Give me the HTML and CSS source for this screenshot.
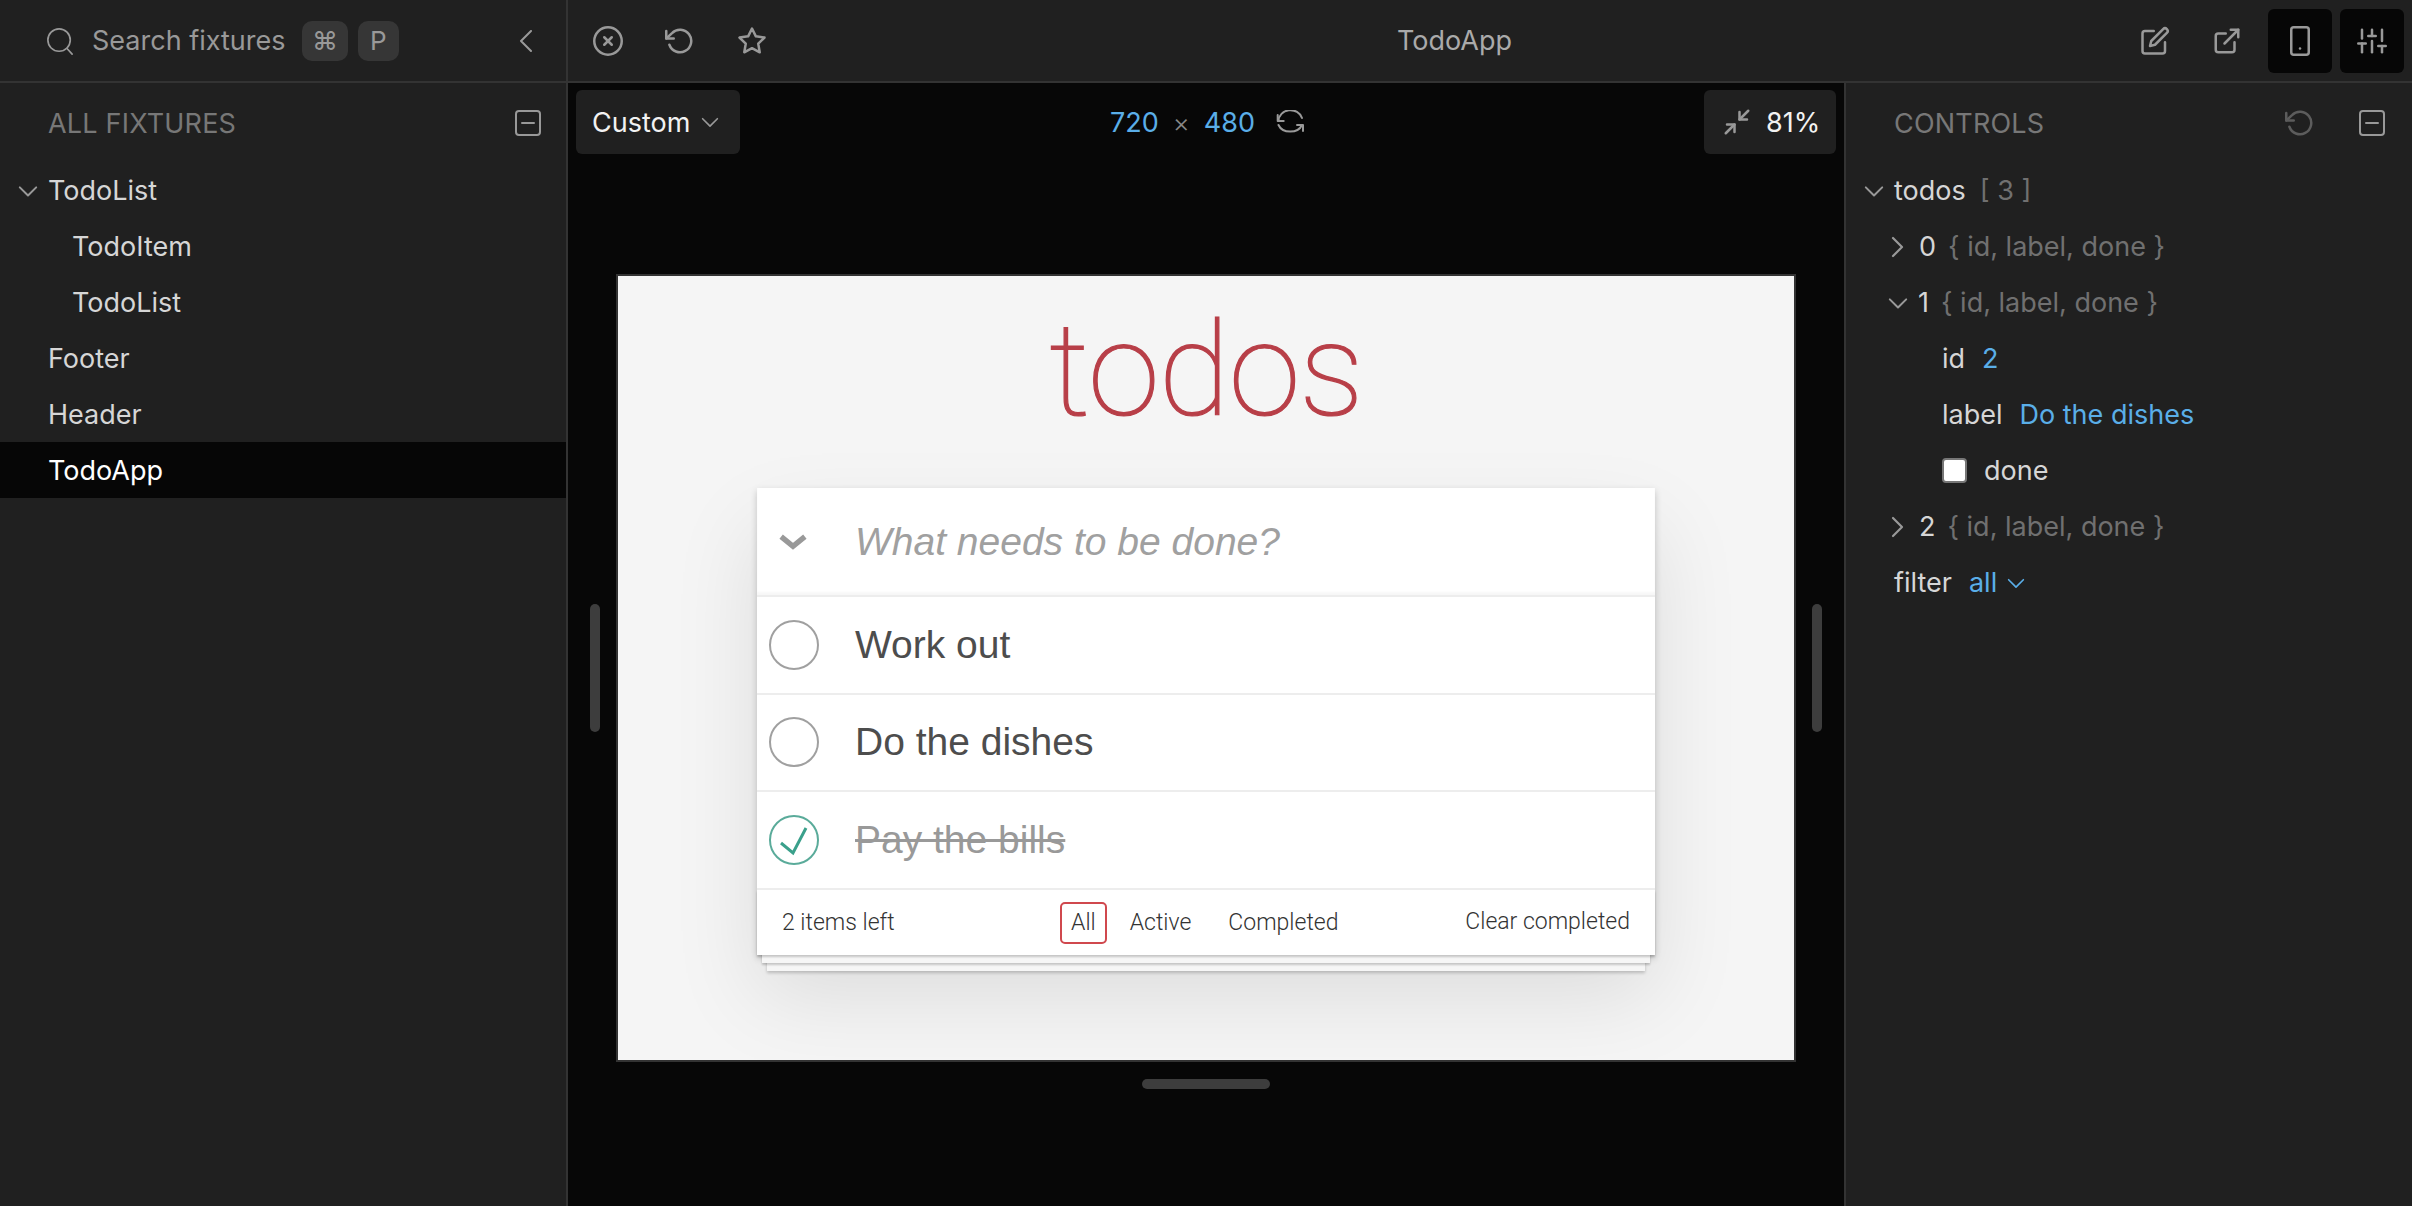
FILE: index.html
```html
<!DOCTYPE html>
<html lang="en">
<head>
  <meta charset="UTF-8" />
  <title>TodoApp - Cosmos</title>
  <link rel="stylesheet" href="styles.css">
</head>
<body>
  <svg class="sprite" width="0" height="0">
    <symbol id="chev-down" viewBox="0 0 22 22"><polyline points="2,7 11,16 20,7"/></symbol>
    <symbol id="chev-right" viewBox="0 0 22 22"><polyline points="7,2 16,11 7,20"/></symbol>
    <symbol id="minus-box" viewBox="0 0 26 26"><rect x="1" y="1" width="24" height="24" rx="3"/><line x1="7" y1="13" x2="19" y2="13"/></symbol>
    <symbol id="reset" viewBox="0 0 24 24"><polyline points="1 4 1 10 7 10"/><path d="M3.51 15a9 9 0 1 0 2.13-9.36L1 10"/></symbol>
  </svg>

  <aside class="sidebar">
    <div class="search-bar">
      <svg class="icon search-icon" viewBox="0 0 30 30"><circle cx="14" cy="14" r="12"/><line x1="22.5" y1="23" x2="28" y2="29"/></svg>
      <span class="search-text">Search fixtures</span>
      <span class="kbd kbd-cmd">⌘</span>
      <span class="kbd">P</span>
      <svg class="icon collapse-icon" viewBox="0 0 14 22"><polyline points="12,1 2,11 12,21"/></svg>
    </div>
    <div class="section-head">
      <span class="section-title">ALL FIXTURES</span>
      <svg class="icon box-icon"><use href="#minus-box"/></svg>
    </div>
    <div class="row has-chev"><svg class="icon chev"><use href="#chev-down"/></svg>TodoList</div>
    <div class="row nested">TodoItem</div>
    <div class="row nested">TodoList</div>
    <div class="row">Footer</div>
    <div class="row">Header</div>
    <div class="row selected">TodoApp</div>
  </aside>

  <div class="main">
    <header class="topbar">
      <div class="topbar-left">
        <svg class="icon tool" viewBox="0 0 24 24"><circle cx="12" cy="12" r="11"/><line x1="15" y1="9" x2="9" y2="15"/><line x1="9" y1="9" x2="15" y2="15"/></svg>
        <svg class="icon tool"><use href="#reset"/></svg>
        <svg class="icon tool" viewBox="0 0 24 24"><polygon points="12 2 15.09 8.26 22 9.27 17 14.14 18.18 21.02 12 17.77 5.82 21.02 7 14.14 2 9.27 8.91 8.26 12 2"/></svg>
      </div>
      <div class="topbar-title">TodoApp</div>
      <div class="topbar-right">
        <svg class="icon tool" viewBox="0 0 24 24"><path d="M11 4H4a2 2 0 0 0-2 2v14a2 2 0 0 0 2 2h14a2 2 0 0 0 2-2v-7"/><path d="M18.5 2.5a2.12 2.12 0 0 1 3 3L12 15l-4 1 1-4 9.5-9.5z"/></svg>
        <svg class="icon tool" viewBox="0 0 24 24"><path d="M18 13v6a2 2 0 0 1-2 2H5a2 2 0 0 1-2-2V8a2 2 0 0 1 2-2h6"/><polyline points="15 3 21 3 21 9"/><line x1="10" y1="14" x2="21" y2="3"/></svg>
        <div class="tool-btn"><svg class="icon tool" viewBox="0 0 24 24"><rect x="5" y="1" width="14" height="22" rx="2"/><line x1="12" y1="18" x2="12.01" y2="18"/></svg></div>
        <div class="tool-btn"><svg class="icon tool" viewBox="0 0 24 24"><line x1="4" y1="21" x2="4" y2="14"/><line x1="4" y1="10" x2="4" y2="3"/><line x1="12" y1="21" x2="12" y2="12"/><line x1="12" y1="8" x2="12" y2="3"/><line x1="20" y1="21" x2="20" y2="16"/><line x1="20" y1="12" x2="20" y2="3"/><line x1="1" y1="14" x2="7" y2="14"/><line x1="9" y1="8" x2="15" y2="8"/><line x1="17" y1="16" x2="23" y2="16"/></svg></div>
      </div>
    </header>

    <div class="workspace">
      <section class="stage">
        <div class="stage-bar">
          <div class="stage-btn custom-btn">Custom <svg class="icon chev-small"><use href="#chev-down"/></svg></div>
          <div class="viewport-size">
            <span class="blue">720</span><span class="times">×</span><span class="blue">480</span>
            <svg class="icon swap-icon" viewBox="0 0 28 24"><polyline points="1.7 5 1.7 11 7.7 11"/><path d="M2.5 11A12 11 0 0 1 26 8"/><polyline points="21 15 27 15 27 21"/><path d="M2.5 15A12.5 10 0 0 0 26 15"/></svg>
          </div>
          <div class="stage-btn zoom-btn">
            <svg class="icon shrink-icon" viewBox="0 0 24 24"><polyline points="4 14 10 14 10 20"/><polyline points="20 10 14 10 14 4"/><line x1="14" y1="10" x2="21" y2="3"/><line x1="3" y1="21" x2="10" y2="14"/></svg>
            81%
          </div>
        </div>

        <div class="frame">
          <h1 class="todo-title">todos</h1>
          <div class="todo-card">
            <div class="todo-input">
              <svg class="toggle-all" viewBox="0 0 26 16"><polyline points="2,3 13,12 24,3"/></svg>
              <span class="placeholder">What needs to be done?</span>
            </div>
            <div class="todo-item">
              <span class="circle"></span>
              <span class="todo-label">Work out</span>
            </div>
            <div class="todo-item">
              <span class="circle"></span>
              <span class="todo-label">Do the dishes</span>
            </div>
            <div class="todo-item">
              <span class="circle done">
                <svg viewBox="0 0 50 50"><polyline points="12,28 24,38 37,13"/></svg>
              </span>
              <span class="todo-label struck">Pay the bills</span>
            </div>
            <div class="todo-footer">
              <span class="left-count">2 items left</span>
              <div class="filters">
                <span class="filter active-filter">All</span>
                <span class="filter">Active</span>
                <span class="filter filter-last">Completed</span>
              </div>
              <span class="clear">Clear completed</span>
            </div>
          </div>
        </div>

        <div class="handle handle-bottom"></div>
        <div class="handle handle-left"></div>
        <div class="handle handle-right"></div>
      </section>

      <aside class="controls">
        <div class="section-head controls-head">
          <span class="section-title">CONTROLS</span>
          <svg class="icon reset-icon"><use href="#reset"/></svg>
          <svg class="icon box-icon"><use href="#minus-box"/></svg>
        </div>
        <div class="row has-chev"><svg class="icon chev"><use href="#chev-down"/></svg>todos<span class="muted gap-l">[ 3 ]</span></div>
        <div class="row prop-closed"><svg class="icon chev-side"><use href="#chev-right"/></svg>0<span class="muted gap-m">{ id, label, done }</span></div>
        <div class="row prop-open"><svg class="icon chev"><use href="#chev-down"/></svg>1<span class="muted gap-m">{ id, label, done }</span></div>
        <div class="row leaf">id<span class="blue gap-s">2</span></div>
        <div class="row leaf">label<span class="blue gap-s">Do the dishes</span></div>
        <div class="row leaf"><span class="check"></span>done</div>
        <div class="row prop-closed"><svg class="icon chev-side"><use href="#chev-right"/></svg>2<span class="muted gap-m">{ id, label, done }</span></div>
        <div class="row">filter<span class="blue gap-s">all</span><svg class="icon chev-blue"><use href="#chev-down"/></svg></div>
      </aside>
    </div>
  </div>
</body>
</html>
```

FILE: styles.css
```css
* {
  box-sizing: border-box;
}

html, body {
  height: 100%;
}

body {
  margin: 0;
  display: flex;
  height: 1206px;
  overflow: hidden;
  background: #202020;
  color: #d6d6d6;
  font-family: Inter, "Noto Sans", sans-serif;
  font-size: 27px;
}

.sprite {
  position: absolute;
}

.icon {
  fill: none;
  stroke: #999;
  stroke-width: 2;
  stroke-linecap: round;
  stroke-linejoin: round;
  flex: none;
}

.blue {
  color: #5aaee8;
}

.muted {
  color: #707070;
}

.gap-s {
  margin-left: 17px;
}

.gap-m {
  margin-left: 12px;
}

.gap-l {
  margin-left: 14px;
}

/* sidebar */
.sidebar {
  width: 568px;
  flex: none;
  border-right: 2px solid #333;
}

.search-bar {
  height: 83px;
  display: flex;
  align-items: center;
  padding-left: 46px;
  border-bottom: 2px solid #333;
}

.search-icon {
  width: 28px;
  height: 30px;
  stroke-width: 1.8;
}

.search-text {
  margin-left: 18px;
  color: #999;
  width: 210px;
}

.kbd {
  height: 40px;
  padding: 0 12px;
  border-radius: 10px;
  background: #363636;
  color: #999;
  font-size: 26px;
  line-height: 40px;
  margin-left: 10px;
}

.kbd-cmd {
  margin-left: 0;
  width: 46px;
  text-align: center;
  padding: 0;
}

.collapse-icon {
  width: 14px;
  height: 22px;
  margin-left: auto;
  margin-right: 33px;
}

.section-head {
  height: 79px;
  display: flex;
  align-items: center;
  justify-content: space-between;
  padding: 1px 25px 0 48px;
}

.section-title {
  color: #777;
  letter-spacing: 0.2px;
}

.box-icon {
  width: 26px;
  height: 26px;
}

.row {
  height: 56px;
  display: flex;
  align-items: center;
  padding-top: 1px;
  padding-left: 48px;
  white-space: pre;
}

.row.has-chev {
  padding-left: 18px;
}

.chev {
  width: 20px;
  height: 20px;
  margin-right: 10px;
  stroke-width: 2.2;
}

.row.nested {
  padding-left: 72px;
}

.row.selected {
  background: #060606;
  color: #fff;
}

/* top bar */
.main {
  flex: 1;
  min-width: 0;
  display: flex;
  flex-direction: column;
}

.topbar {
  height: 83px;
  flex: none;
  display: flex;
  align-items: center;
  border-bottom: 2px solid #333;
  padding: 0 8px 0 25px;
}

.tool {
  width: 30px;
  height: 30px;
}

.topbar-left {
  width: 550px;
  display: flex;
  gap: 42px;
}

.topbar-title {
  flex: 1;
  text-align: center;
  color: #aaa;
}

.topbar-right {
  width: 638px;
  display: flex;
  align-items: center;
  justify-content: flex-end;
  gap: 8px;
}

.topbar-right > .tool:first-child {
  margin-right: 34px;
}

.topbar-right > .tool:nth-child(2) {
  margin-right: 18px;
}

.tool-btn {
  width: 64px;
  height: 64px;
  background: #060606;
  border-radius: 6px;
  display: flex;
  align-items: center;
  justify-content: center;
}

/* stage */
.workspace {
  flex: 1;
  display: flex;
  min-height: 0;
}

.stage {
  position: relative;
  width: 1276px;
  flex: none;
  background: #070707;
  display: flex;
  flex-direction: column;
  align-items: center;
  padding: 7px 8px 0;
}

.stage-bar {
  position: relative;
  align-self: stretch;
  height: 64px;
  display: flex;
  align-items: center;
  justify-content: space-between;
}

.stage-btn {
  height: 64px;
  background: #202020;
  border-radius: 6px;
  display: flex;
  align-items: center;
  color: #f2f2f2;
}

.custom-btn {
  width: 164px;
  padding-left: 16px;
  gap: 11px;
}

.chev-small {
  width: 18px;
  height: 18px;
}

.zoom-btn {
  width: 132px;
  padding-left: 18px;
  gap: 14px;
}

.shrink-icon {
  width: 30px;
  height: 30px;
}

.viewport-size {
  position: absolute;
  left: 534px;
  top: 0;
  height: 64px;
  display: flex;
  align-items: center;
}

.times {
  color: #888;
  margin: 0 14px;
  font-size: 26px;
  font-weight: 300;
}

.swap-icon {
  width: 28px;
  height: 24px;
  margin-left: 21px;
}

.handle {
  background: #3d3d3d;
  border-radius: 6px;
}

.handle-bottom {
  width: 128px;
  height: 10px;
  margin-top: 17px;
}

.handle-left,
.handle-right {
  position: absolute;
  top: 521px;
  width: 10px;
  height: 128px;
}

.handle-left {
  left: 22px;
}

.handle-right {
  left: 1244px;
}

/* the fixture */
.frame {
  width: 1180px;
  height: 788px;
  margin-top: 120px;
  border: 2px solid #333;
  background: #f5f5f5;
  display: flex;
  flex-direction: column;
  align-items: center;
  overflow: hidden;
  font-family: "Liberation Sans", Arial, sans-serif;
}

.todo-title {
  margin: 0;
  height: 212px;
  font-family: Roboto, "Liberation Sans", sans-serif;
  font-weight: 100;
  font-size: 130px;
  letter-spacing: -1px;
  line-height: 190px;
  color: #b83f48;
  -webkit-text-stroke: 1.2px #b83f48;
}

.todo-card {
  width: 898px;
  background: #fff;
  box-shadow: 0 3px 7px rgba(0, 0, 0, 0.2), 0 41px 82px rgba(0, 0, 0, 0.1);
}

.todo-input {
  height: 109px;
  display: flex;
  align-items: center;
  border-bottom: 2px solid #ededed;
  box-shadow: inset 0 -3px 2px rgba(0, 0, 0, 0.03);
  padding-left: 22px;
}

.toggle-all {
  width: 28px;
  height: 18px;
  fill: none;
  stroke: #999;
  stroke-width: 5;
}

.placeholder {
  margin-left: 48px;
  font-style: italic;
  font-size: 39px;
  color: #a0a0a0;
}

.todo-item {
  height: 97.5px;
  display: flex;
  align-items: center;
  border-bottom: 2px solid #ededed;
  padding-left: 12px;
  font-size: 39px;
  color: #4d4d4d;
}

.circle {
  width: 50px;
  height: 50px;
  flex: none;
  border: 2px solid #a0a0a0;
  border-radius: 50%;
}

.circle.done {
  border-color: #5aab9a;
}

.circle.done svg {
  display: block;
  margin: -2px;
  width: 50px;
  height: 50px;
  fill: none;
  stroke: #3aa08b;
  stroke-width: 3;
}

.todo-label {
  margin-left: 36px;
}

.struck {
  color: #999;
  text-decoration: line-through;
}

.todo-footer {
  height: 65px;
  display: flex;
  align-items: center;
  padding: 1px 25px 0;
  position: relative;
  font-family: Roboto, "Liberation Sans", sans-serif;
  font-weight: 300;
  font-size: 23px;
  color: #333;
  box-shadow: 0 2px 2px rgba(0, 0, 0, 0.2),
    0 13px 0 -5px #f6f6f6,
    0 15px 2px -5px rgba(0, 0, 0, 0.2),
    0 26px 0 -10px #f6f6f6,
    0 28px 3px -10px rgba(0, 0, 0, 0.2);
}

.left-count {
  width: 278px;
}

.filters {
  display: flex;
  gap: 12px;
}

.filter {
  height: 42px;
  line-height: 38px;
  padding: 0 9px;
  border: 2px solid transparent;
  border-radius: 5px;
}

.filter-last {
  margin-left: 3px;
}

.active-filter {
  border-color: #d0484e;
}

.clear {
  margin-left: auto;
  margin-top: -2px;
}

/* controls panel */
.controls {
  flex: 1;
  min-width: 0;
  border-left: 2px solid #333;
}

.controls-head {
  padding: 1px 27px 0 48px;
  justify-content: flex-start;
}

.reset-icon {
  width: 30px;
  height: 30px;
  margin-left: auto;
  margin-right: 44px;
  stroke: #5c5c5c;
}

.prop-closed {
  padding-left: 40px;
}

.chev-side {
  width: 22px;
  height: 22px;
  margin-right: 11px;
  stroke-width: 2.2;
}

.prop-open {
  padding-left: 42px;
}

.leaf {
  padding-left: 96px;
}

.check {
  width: 25px;
  height: 25px;
  background: #fff;
  border: 2px solid #777;
  border-radius: 4px;
  margin-right: 17px;
}

.chev-blue {
  width: 18px;
  height: 18px;
  margin-left: 10px;
  stroke: #5aaee8;
}
```
